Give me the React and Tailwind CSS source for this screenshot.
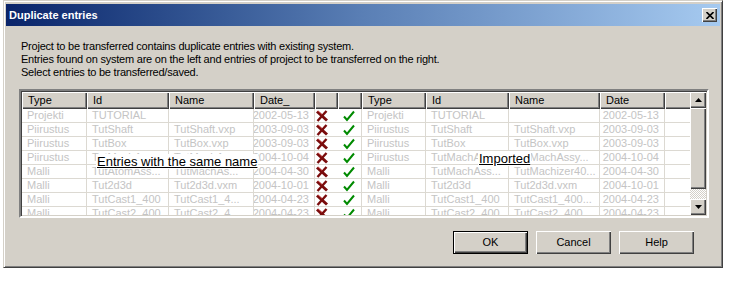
import React from "react";

const font = { fontFamily: '"Liberation Sans", Arial, sans-serif' };

const cols = [65, 82, 85, 61, 23, 24, 64, 83, 91, 65, 27];

const leftRows = [
  ["Projekti", "TUTORIAL", "", "2002-05-13"],
  ["Piirustus", "TutShaft", "TutShaft.vxp", "2003-09-03"],
  ["Piirustus", "TutBox", "TutBox.vxp", "2003-09-03"],
  ["Piirustus", "TutMachAss...", "TutMachAs...", "2004-10-04"],
  ["Malli", "TutAtomAss...", "TutMachAs...", "2004-04-30"],
  ["Malli", "Tut2d3d", "Tut2d3d.vxm", "2004-10-01"],
  ["Malli", "TutCast1_400", "TutCast1_4...", "2004-04-23"],
  ["Malli", "TutCast2_400", "TutCast2_4...", "2004-04-23"],
];

const rightRows = [
  ["Projekti", "TUTORIAL", "", "2002-05-13"],
  ["Piirustus", "TutShaft", "TutShaft.vxp", "2003-09-03"],
  ["Piirustus", "TutBox", "TutBox.vxp", "2003-09-03"],
  ["Piirustus", "TutMachAss...", "TutMachAssy...", "2004-10-04"],
  ["Malli", "TutMachAss...", "TutMachizer40...", "2004-04-30"],
  ["Malli", "Tut2d3d", "Tut2d3d.vxm", "2004-10-01"],
  ["Malli", "TutCast1_400", "TutCast1_400...", "2004-04-23"],
  ["Malli", "TutCast2_400", "TutCast2_400", "2004-04-23"],
];

const headers = ["Type", "Id", "Name", "Date_", "", "", "Type", "Id", "Name", "Date", ""];

const RedX = () => (
  <svg width="12" height="12" viewBox="0 0 12 12">
    <path d="M1 1.5 L11 10.5" stroke="#7a0c0c" strokeWidth="3" />
    <path d="M10.5 1 L1.5 11" stroke="#7a0c0c" strokeWidth="2.4" />
    <path d="M2 1 L6 4.6" stroke="#d04040" strokeWidth="0.8" />
  </svg>
);

const Check = () => (
  <svg width="12" height="12" viewBox="0 0 12 12">
    <path d="M1 6.5 L4 10 L11 1.5" stroke="#008a00" strokeWidth="2" fill="none" />
  </svg>
);

const Btn = ({ label, primary }) => (
  <button
    className={`w-[75px] h-[23px] bg-[#d4d0c8] text-[11px] text-black ${
      primary
        ? "border border-black shadow-[inset_1px_1px_0_#fff,inset_-1px_-1px_0_#404040,inset_-2px_-2px_0_#808080]"
        : "shadow-[inset_1px_1px_0_#fff,inset_-1px_-1px_0_#404040,inset_-2px_-2px_0_#808080]"
    }`}
  >
    {label}
  </button>
);

const Cell = ({ w, children, right }) => (
  <div
    className={`h-full shrink-0 border-r border-b border-[#dcd9d2] flex items-center overflow-hidden whitespace-nowrap px-[5px] ${
      right ? "justify-end" : ""
    }`}
    style={{ width: w }}
  >
    {children}
  </div>
);

export default function App() {
  return (
    <div className="w-[729px] h-[282px] bg-white overflow-hidden" style={font}>
      <div className="ml-[3px] w-[720px] h-[268px] bg-[#d4d0c8] border-t border-l border-[#d4d0c8] border-r border-b border-r-[#404040] border-b-[#404040] shadow-[inset_1px_1px_0_#fff,inset_-1px_-1px_0_#808080] pt-[3px] px-[1px] flex flex-col">
        {/* title bar */}
        <div className="h-[22px] mx-[1px] bg-gradient-to-r from-[#0a246a] via-[#5a7fb5] to-[#a6caf0] flex items-center justify-between pl-[3px] pr-[3px]">
          <span className="text-white font-bold text-[11px]">Duplicate entries</span>
          <div className="w-[15px] h-[14px] bg-[#d4d0c8] shadow-[inset_1px_1px_0_#fff,inset_-1px_-1px_0_#404040,inset_-2px_-2px_0_#808080] flex items-center justify-center">
            <svg width="8" height="7" viewBox="0 0 8 7">
              <path d="M0.5 0 L7.5 7 M7.5 0 L0.5 7" stroke="#000" strokeWidth="1.6" />
            </svg>
          </div>
        </div>

        {/* message */}
        <div className="mt-[14px] pl-[16px] text-[11px] leading-[13px] tracking-[-0.22px] text-black">
          <p>Project to be transferred contains duplicate entries with existing system.</p>
          <p>Entries found on system are on the left and entries of project to be transferred on the right.</p>
          <p>Select entries to be transferred/saved.</p>
        </div>

        {/* table */}
        <div className="mt-[10px] ml-[14px] w-[690px] h-[129px] border-2 border-t-[#808080] border-l-[#808080] border-r-white border-b-white shadow-[inset_1px_1px_0_#404040,inset_-1px_-1px_0_#d4d0c8] p-[1px] bg-white relative flex">
          <div className="flex-1 overflow-hidden flex flex-col text-[11px]">
            <div className="flex h-[17px] shrink-0">
              {headers.map((h, i) => (
                <div
                  key={i}
                  className="h-full shrink-0 bg-[#d4d0c8] shadow-[inset_1px_1px_0_#fff,inset_-1px_-1px_0_#404040,inset_-2px_-2px_0_#808080] flex items-center pl-[6px] text-black whitespace-nowrap"
                  style={{ width: cols[i] }}
                >
                  {h}
                </div>
              ))}
            </div>
            {leftRows.map((r, i) => {
              const rr = rightRows[i];
              return (
                <div key={i} className="flex h-[14px] shrink-0 text-[#c4c4c4]">
                  <Cell w={cols[0]}>{r[0]}</Cell>
                  <Cell w={cols[1]}>{r[1]}</Cell>
                  <Cell w={cols[2]}>{r[2]}</Cell>
                  <Cell w={cols[3]} right>{r[3]}</Cell>
                  <div className="h-full shrink-0 border-b border-[#dcd9d2] flex items-center pl-[1px]" style={{ width: cols[4] }}>
                    <RedX />
                  </div>
                  <Cell w={cols[5]}>
                    <Check />
                  </Cell>
                  <Cell w={cols[6]}>{rr[0]}</Cell>
                  <Cell w={cols[7]}>{rr[1]}</Cell>
                  <Cell w={cols[8]}>{rr[2]}</Cell>
                  <Cell w={cols[9]} right>{rr[3]}</Cell>
                  <Cell w={cols[10]} />
                </div>
              );
            })}
          </div>

          {/* scrollbar */}
          <div className="w-[16px] shrink-0 flex flex-col bg-[#d4d0c8]">
            <div className="h-[16px] shrink-0 bg-[#d4d0c8] shadow-[inset_1px_1px_0_#fff,inset_-1px_-1px_0_#404040,inset_-2px_-2px_0_#808080] flex items-center justify-center">
              <svg width="7" height="4" viewBox="0 0 7 4"><path d="M3.5 0 L7 4 L0 4 Z" fill="#000" /></svg>
            </div>
            <div className="flex-1 bg-[#d4d0c8] shadow-[inset_1px_1px_0_#fff,inset_-1px_-1px_0_#404040,inset_-2px_-2px_0_#808080]" />
            <div className="h-[10px] shrink-0 bg-[repeating-conic-gradient(#d4d0c8_0_25%,#ffffff_0_50%)] bg-[length:2px_2px]" />
            <div className="h-[16px] shrink-0 bg-[#d4d0c8] shadow-[inset_1px_1px_0_#fff,inset_-1px_-1px_0_#404040,inset_-2px_-2px_0_#808080] flex items-center justify-center">
              <svg width="7" height="4" viewBox="0 0 7 4"><path d="M0 0 L7 0 L3.5 4 Z" fill="#000" /></svg>
            </div>
          </div>

          {/* drag labels */}
          <span className="absolute left-[75px] top-[63px] bg-white text-black text-[13px] leading-[15px] underline px-[1px]">
            Entries with the same name
          </span>
          <span className="absolute left-[457px] top-[60px] bg-white text-black text-[13px] leading-[15px] underline px-[1px]">
            Imported
          </span>
        </div>

        {/* buttons */}
        <div className="mt-[13px] flex justify-end gap-[8px] pr-[27px]">
          <Btn label="OK" primary />
          <Btn label="Cancel" />
          <Btn label="Help" />
        </div>
      </div>
    </div>
  );
}
